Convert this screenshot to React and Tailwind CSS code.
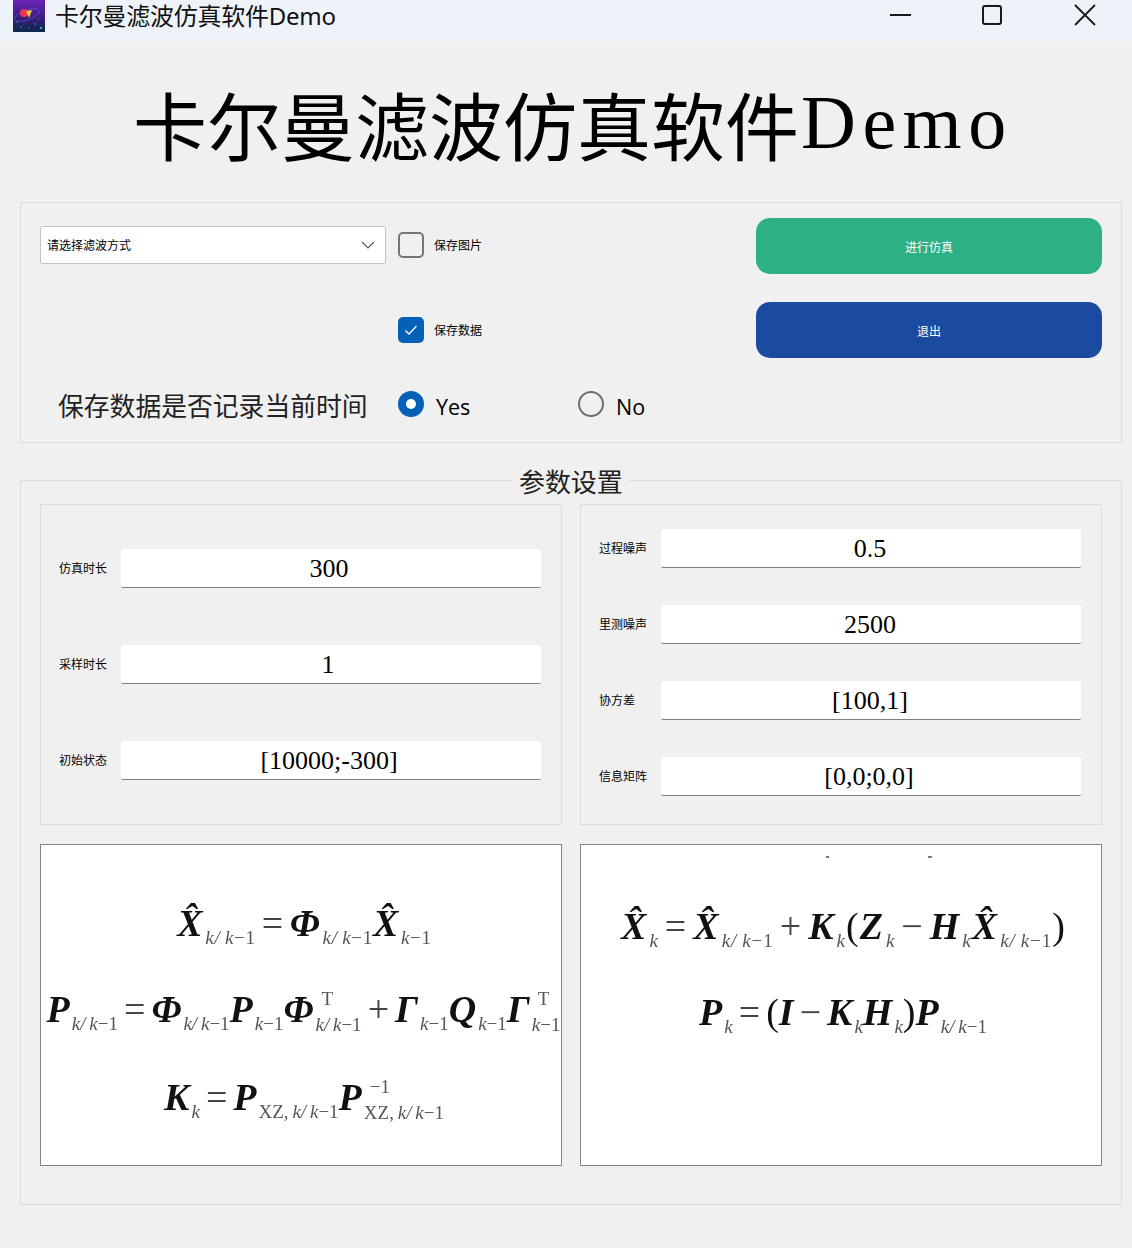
import React from "react";

const CJK = "font-['Noto_Sans','Noto_Sans_CJK_SC',sans-serif]";
const SERIF = "font-['Liberation_Serif','Noto_Sans_CJK_SC',serif]";

const KK = <>k/&#8201;k<span className="not-italic">−1</span></>;
const K1 = <>k<span className="not-italic">−1</span></>;
const XZ = <><span className="not-italic">XZ,&#8201;</span>k/&#8201;k<span className="not-italic">−1</span></>;

function Sub({ children }) {
  return <span className="ml-[2px] align-[-8px] text-[19px] leading-none font-normal italic text-[#555]">{children}</span>;
}
function Scripts({ sup, sub }) {
  return (
    <span className="ml-[2px] inline-flex flex-col items-start gap-[7px] align-[17px] text-[19px] leading-none font-normal text-[#555]">
      <span className="ml-[6px] not-italic">{sup}</span>
      <span className="italic">{sub}</span>
    </span>
  );
}
function V({ children }) {
  return <span className="font-bold italic">{children}</span>;
}
function Op({ children }) {
  return <span className="mx-[6px] font-normal text-[#444]">{children}</span>;
}
function Hat() {
  return <span className="font-bold italic">{"X\u0302"}</span>;
}
function Line({ children, className = "" }) {
  return <div className={`text-[38px] leading-[44px] whitespace-nowrap text-[#111] blur-[0.4px] ${className}`}>{children}</div>;
}

function Field({ label, value, pr = "pr-[0px]" }) {
  return (
    <div className="flex items-center">
      <span className={`w-[80px] pl-[18px] text-[12px] text-black ${CJK}`}>{label}</span>
      <div className={`flex h-[39px] w-[420px] items-center justify-center rounded-[2px] border-b border-b-[#7f7f7f] bg-white text-[26px] text-black ${SERIF} ${pr}`}>
        {value}
      </div>
    </div>
  );
}

function Radio({ checked, label, className = "" }) {
  return (
    <div className={`flex items-center gap-[12px] ${className}`}>
      {checked ? (
        <span className="flex h-[26px] w-[26px] items-center justify-center rounded-full bg-[#0560b8]">
          <span className="h-[10px] w-[10px] rounded-full bg-white" />
        </span>
      ) : (
        <span className="h-[26px] w-[26px] rounded-full border-2 border-[#6e6e6e]" />
      )}
      <span className="pt-[6px] font-['Open_Sans',sans-serif] text-[21.5px] text-black">{label}</span>
    </div>
  );
}

function CheckRow({ checked, label }) {
  return (
    <div className="flex items-center gap-[10px]">
      {checked ? (
        <span className="flex h-[26px] w-[26px] items-center justify-center rounded-[5px] bg-[#0560b8]">
          <svg width="16" height="16" viewBox="0 0 16 16" fill="none"><path d="M2.5 8.5 6 12l7.5-8" stroke="white" strokeWidth="1.3" /></svg>
        </span>
      ) : (
        <span className="h-[26px] w-[26px] rounded-[5px] border-2 border-[#757575]" />
      )}
      <span className={`pt-[2px] text-[12px] text-black ${CJK}`}>{label}</span>
    </div>
  );
}

export default function App() {
  return (
    <div className="h-[1248px] w-[1132px] overflow-hidden bg-[#f0f0f0]">
      <header className="flex h-[43px] items-start bg-[#eef3f9]">
        <svg className="ml-[13px] h-[32px] w-[32px]" viewBox="0 0 32 32">
          <defs>
            <linearGradient id="sky" x1="0" y1="0" x2="0" y2="1">
              <stop offset="0" stopColor="#6a24b8" />
              <stop offset="0.55" stopColor="#3a1c80" />
              <stop offset="1" stopColor="#0b2a4a" />
            </linearGradient>
          </defs>
          <rect width="32" height="32" fill="url(#sky)" />
          <ellipse cx="14" cy="15" rx="13" ry="5" fill="none" stroke="#6a5bd0" strokeWidth="0.6" transform="rotate(-20 14 15)" />
          <circle cx="11" cy="13" r="4" fill="#e8384f" />
          <path d="M13 11l6-1-3 8z" fill="#f3c945" />
          <circle cx="28" cy="28" r="1" fill="#3fd6d0" />
          <circle cx="22" cy="24" r="0.7" fill="#3fd6d0" />
          <circle cx="8" cy="27" r="0.7" fill="#3fb0d6" />
          <circle cx="16" cy="28" r="0.6" fill="#3fd6d0" />
          <circle cx="25" cy="19" r="0.6" fill="#69a7e0" />
          <circle cx="4" cy="22" r="0.6" fill="#69a7e0" />
        </svg>
        <span className={`ml-[10px] h-[32px] text-[24px] leading-[32px] tracking-[-0.25px] text-[#111] ${CJK}`}>卡尔曼滤波仿真软件Demo</span>
        <div className="ml-auto flex">
          <svg className="mr-[69px] mt-[5px]" width="22" height="22" viewBox="0 0 22 22"><path d="M0 10h21" stroke="#1a1a1a" strokeWidth="2" /></svg>
          <svg className="mr-[71px] mt-[4px]" width="22" height="22" viewBox="0 0 22 22"><rect x="2" y="2" width="18" height="18" rx="2" fill="none" stroke="#1a1a1a" strokeWidth="2" /></svg>
          <svg className="mr-[36px] mt-[4px]" width="22" height="22" viewBox="0 0 22 22"><path d="M1 1l20 20M21 1L1 21" stroke="#1a1a1a" strokeWidth="1.8" /></svg>
        </div>
      </header>

      <h1 className={`box-border h-[159px] overflow-hidden whitespace-nowrap pl-[133px] pt-[15px] text-[74px] leading-[144px] font-normal text-black ${SERIF}`}>
        卡尔曼滤波仿真软件<span className="ml-[2px] align-[7px] text-[76px] leading-none tracking-[6.5px]">Demo</span>
      </h1>

      <section className="mx-[20px] flex h-[241px] w-[1102px] border border-[#dcdcdc]">
        <div className="w-[735px]">
          <div className="mt-[23px] flex items-center">
            <div className={`ml-[19px] flex h-[38px] w-[346px] items-center justify-between rounded-[2px] border border-[#c4c4c4] bg-white pl-[6px] pr-[9px] text-[12px] text-black ${CJK}`}>
              <span className="pt-[2px]">请选择滤波方式</span>
              <svg width="16" height="16" viewBox="0 0 16 16" fill="none"><path d="M2 5l6 6 6-6" stroke="#555" strokeWidth="1.1" /></svg>
            </div>
            <div className="ml-[12px]"><CheckRow label="保存图片" /></div>
          </div>
          <div className="ml-[377px] mt-[53px]"><CheckRow checked label="保存数据" /></div>
          <div className="mt-[42px] flex items-center">
            <span className={`ml-[37px] w-[340px] pt-[8px] text-[25.8px] leading-[30px] text-[#222] ${SERIF}`}>保存数据是否记录当前时间</span>
            <Radio checked label="Yes" className="w-[180px]" />
            <Radio label="No" />
          </div>
        </div>
        <div className="flex flex-col gap-[28px] pt-[15px]">
          <button className={`h-[56px] w-[346px] rounded-[14px] bg-[#2eb086] pt-[3px] text-[12px] text-white ${CJK}`}>进行仿真</button>
          <button className={`h-[56px] w-[346px] rounded-[14px] bg-[#1b4ba0] pt-[4px] text-[12px] text-white ${CJK}`}>退出</button>
        </div>
      </section>

      <section className="relative mx-[20px] mt-[37px] h-[725px] w-[1102px] border border-[#dcdcdc] px-[19px] pt-[23px]">
        <span className={`absolute left-[492px] -top-[12px] bg-[#f0f0f0] px-[6px] text-[26px] leading-[30px] tracking-[-0.1px] text-[#222] ${SERIF}`}>参数设置</span>
        <div className="flex gap-[18px]">
          <div className="flex h-[321px] w-[522px] flex-col gap-[57px] border border-[#dcdcdc] pt-[44px]">
            <Field label="仿真时长" value="300" pr="pr-[4px]" />
            <Field label="采样时长" value="1" pr="pr-[6px]" />
            <Field label="初始状态" value="[10000;-300]" pr="pr-[4px]" />
          </div>
          <div className="flex h-[321px] w-[522px] flex-col gap-[37px] border border-[#dcdcdc] pt-[24px]">
            <Field label="过程噪声" value="0.5" pr="pr-[2px]" />
            <Field label="里测噪声" value="2500" pr="pr-[2px]" />
            <Field label="协方差" value="[100,1]" pr="pr-[2px]" />
            <Field label="信息矩阵" value="[0,0;0,0]" pr="pr-[4px]" />
          </div>
        </div>
        <div className="mt-[19px] flex gap-[18px]">
          <div className={`flex h-[322px] w-[522px] flex-col items-center border border-[#7e8590] bg-white pt-[56px] ${SERIF}`}>
            <Line className="ml-[7px] tracking-[0.7px]"><Hat /><Sub>{KK}</Sub><Op>=</Op><V>Φ</V><Sub>{KK}</Sub><Hat /><Sub>{K1}</Sub></Line>
            <Line className="mt-[40px] ml-[5px]"><V>P</V><Sub>{KK}</Sub><Op>=</Op><V>Φ</V><Sub>{KK}</Sub><V>P</V><Sub>{K1}</Sub><V>Φ</V><Scripts sup="T" sub={KK} /><Op>+</Op><V>Γ</V><Sub>{K1}</Sub><V>Q</V><Sub>{K1}</Sub><V>Γ</V><Scripts sup="T" sub={K1} /></Line>
            <Line className="mt-[41px] ml-[6px]"><V>K</V><Sub>k</Sub><Op>=</Op><V>P</V><Sub>{XZ}</Sub><V>P</V><Scripts sup="−1" sub={XZ} /></Line>
          </div>
          <div className={`flex h-[322px] w-[522px] flex-col items-center border border-[#7e8590] bg-white pt-[11px] ${SERIF}`}>
            <div className="ml-[76px] flex gap-[99px]">
              <span className="h-[2px] w-[3px] bg-[#777]" />
              <span className="h-[2px] w-[4px] bg-[#777]" />
            </div>
            <Line className="mt-[46px] ml-[5px] tracking-[1px]"><Hat /><Sub>k</Sub><Op>=</Op><Hat /><Sub>{KK}</Sub><Op>+</Op><V>K</V><Sub>k</Sub><span>(</span><V>Z</V><Sub>k</Sub><Op>−</Op><V>H</V><Sub>k</Sub><Hat /><Sub>{KK}</Sub><span>)</span></Line>
            <Line className="mt-[40px] ml-[4px]"><V>P</V><Sub>k</Sub><Op>=</Op><span>(</span><V>I</V><Op>−</Op><V>K</V><Sub>k</Sub><V>H</V><Sub>k</Sub><span>)</span><V>P</V><Sub>{KK}</Sub></Line>
          </div>
        </div>
      </section>
    </div>
  );
}
